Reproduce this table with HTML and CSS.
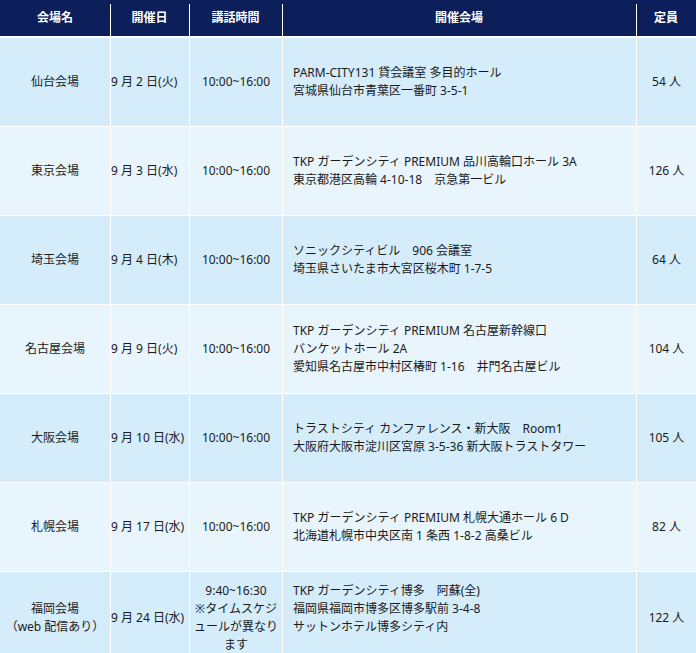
FILE: index.html
```html
<!DOCTYPE html>
<html lang="ja">
<head>
<meta charset="utf-8">
<title>会場一覧</title>
<link rel="stylesheet" href="styles.css">
</head>
<body>
<table class="venues">
  <colgroup>
    <col class="c-name">
    <col class="c-date">
    <col class="c-time">
    <col class="c-place">
    <col class="c-cap">
  </colgroup>
  <thead>
    <tr>
      <th>会場名</th>
      <th class="sep">開催日</th>
      <th class="sep">講話時間</th>
      <th class="sep">開催会場</th>
      <th class="sep">定員</th>
    </tr>
  </thead>
  <tbody>
    <tr class="odd">
      <td class="name">仙台会場</td>
      <td class="date">9 月 2 日(火)</td>
      <td class="time">10:00~16:00</td>
      <td class="place">PARM-CITY131 貸会議室 多目的ホール<br>宮城県仙台市青葉区一番町 3-5-1</td>
      <td class="cap">54 人</td>
    </tr>
    <tr class="even">
      <td class="name">東京会場</td>
      <td class="date">9 月 3 日(水)</td>
      <td class="time">10:00~16:00</td>
      <td class="place">TKP ガーデンシティ PREMIUM 品川高輪口ホール 3A<br>東京都港区高輪 4-10-18　京急第一ビル</td>
      <td class="cap">126 人</td>
    </tr>
    <tr class="odd">
      <td class="name">埼玉会場</td>
      <td class="date">9 月 4 日(木)</td>
      <td class="time">10:00~16:00</td>
      <td class="place">ソニックシティビル　906 会議室<br>埼玉県さいたま市大宮区桜木町 1-7-5</td>
      <td class="cap">64 人</td>
    </tr>
    <tr class="even">
      <td class="name">名古屋会場</td>
      <td class="date">9 月 9 日(火)</td>
      <td class="time">10:00~16:00</td>
      <td class="place">TKP ガーデンシティ PREMIUM 名古屋新幹線口<br>バンケットホール 2A<br>愛知県名古屋市中村区椿町 1-16　井門名古屋ビル</td>
      <td class="cap">104 人</td>
    </tr>
    <tr class="odd">
      <td class="name">大阪会場</td>
      <td class="date">9 月 10 日(水)</td>
      <td class="time">10:00~16:00</td>
      <td class="place">トラストシティ カンファレンス・新大阪　Room1<br>大阪府大阪市淀川区宮原 3-5-36 新大阪トラストタワー</td>
      <td class="cap">105 人</td>
    </tr>
    <tr class="even">
      <td class="name">札幌会場</td>
      <td class="date">9 月 17 日(水)</td>
      <td class="time">10:00~16:00</td>
      <td class="place">TKP ガーデンシティ PREMIUM 札幌大通ホール 6 D<br>北海道札幌市中央区南 1 条西 1-8-2 高桑ビル</td>
      <td class="cap">82 人</td>
    </tr>
    <tr class="odd last">
      <td class="name">福岡会場<br>（web 配信あり）</td>
      <td class="date">9 月 24 日(水)</td>
      <td class="time">9:40~16:30<br>※タイムスケジュールが異なります</td>
      <td class="place">TKP ガーデンシティ博多　阿蘇(全)<br>福岡県福岡市博多区博多駅前 3-4-8<br>サットンホテル博多シティ内<br><br></td>
      <td class="cap">122 人</td>
    </tr>
  </tbody>
</table>
</body>
</html>
```

FILE: styles.css
```css
html, body {
  margin: 0;
  padding: 0;
  background: #ffffff;
}

body {
  font-family: "Noto Sans", "Noto Sans CJK JP", sans-serif;
  font-size: 12px;
  line-height: 18px;
  color: #1a1a1a;
}

.venues {
  width: 696px;
  table-layout: fixed;
  border-collapse: separate;
  border-spacing: 0;
}

.c-name { width: 110px; }
.c-date { width: 79px; }
.c-time { width: 93px; }
.c-place { width: 354px; }
.c-cap { width: 60px; }

.venues th {
  height: 36px;
  padding: 0;
  background: #0c1f5b;
  color: #ffffff;
  font-weight: bold;
  font-size: 12px;
  text-align: center;
  vertical-align: middle;
  border-bottom: 1px solid #ffffff;
}

.venues th.sep {
  background:
    linear-gradient(to right, #ffffff 1px, transparent 1px) 0 4px / 100% calc(100% - 4px) no-repeat,
    #0c1f5b;
}

.venues td {
  height: 88px;
  padding: 0;
  vertical-align: middle;
  border-top: 1px solid #ffffff;
  border-left: 1px solid #ffffff;
}

.venues td:first-child {
  border-left: none;
}

.odd td { background: #d5ecfb; }
.even td { background: #e9f5fd; }

.name {
  text-align: center;
}

.date {
  text-align: left;
  padding-left: 1px;
  white-space: nowrap;
}

.venues td.time {
  text-align: center;
  padding: 0 3px;
  line-break: loose;
}

.venues td.place {
  text-align: left;
  padding-left: 10px;
}

.cap {
  text-align: center;
}

.last td {
  height: 92px;
}
```
